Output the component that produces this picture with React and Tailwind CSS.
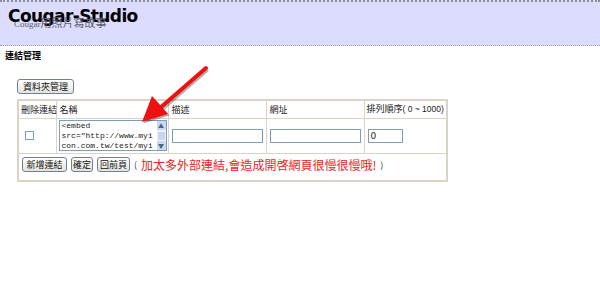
import React from 'react'

const cjk = { fontFamily: '"Noto Sans CJK TC", "DejaVu Sans", sans-serif' }

function Btn({ children, className = '' }) {
  return (
    <button
      className={`h-[15px] rounded-[3px] border border-[#6f7f99] bg-gradient-to-b from-white to-[#e3e3dd] text-[9px] leading-[13px] text-[#111] whitespace-nowrap ${className}`}
    >
      {children}
    </button>
  )
}

function Arrow() {
  return (
    <svg className="absolute left-[138px] top-[62px]" width="80" height="66" viewBox="0 0 80 66">
      <g transform="translate(1.5,1.5)" opacity="0.35">
        <line x1="68" y1="6" x2="22" y2="46" stroke="#222" strokeWidth="4" />
        <polygon points="4,60 14,34 30,52" fill="#222" />
      </g>
      <line x1="68" y1="6" x2="22" y2="46" stroke="#ee1111" strokeWidth="4" strokeLinecap="round" />
      <polygon points="4,60 14,34 30,52" fill="#ee1111" />
    </svg>
  )
}

export default function App() {
  return (
    <div className="relative w-[600px] h-[286px] bg-white overflow-hidden" style={cjk}>
      {/* header */}
      <div className="h-[46px] bg-[#dcdcfe] border-t-[2px] border-[#8a8f97] border-b border-b-[#9a9aa8] border-dotted">
        <div className="relative pl-[8px] pt-[3px]">
          <div className="text-[17px] font-bold leading-[22px] text-black" style={{ fontFamily: '"DejaVu Sans", sans-serif', letterSpacing: '-0.6px' }}>
            Cougar-Studio
          </div>
          <div className="absolute left-[14px] top-[15px] text-[11px] leading-[12px] text-[#5c5c72]" style={{ fontFamily: '"Liberation Serif", "Noto Sans CJK TC", serif' }}>
            <span className="text-[9px]">Cougar</span>用照片寫故事
          </div>
        </div>
      </div>

      <div className="pl-[5px] pt-[4px] text-[9px] leading-[12px] font-bold text-black">連結管理</div>

      <div className="flex pl-[17px] pt-[17px] h-[37px]">
        <Btn className="w-[57px]">資料夾管理</Btn>
      </div>

      <table className="ml-[17px] w-[431px] table-fixed border-collapse border-[2px] border-[#d8d4c8] text-[9px] text-[#222]">
        <colgroup>
          <col className="w-[38px]" />
          <col className="w-[112px]" />
          <col className="w-[98px]" />
          <col className="w-[98px]" />
          <col />
        </colgroup>
        <tbody>
          <tr className="h-[18px]">
            <td className="border border-[#d8d4c8] px-[2px] whitespace-nowrap">刪除連結</td>
            <td className="border border-[#d8d4c8] px-[3px]">名稱</td>
            <td className="border border-[#d8d4c8] px-[3px]">描述</td>
            <td className="border border-[#d8d4c8] px-[3px]">網址</td>
            <td className="border border-[#d8d4c8] pl-[2px] pr-0 whitespace-nowrap overflow-hidden">
              排列順序<span style={{ fontFamily: '"Liberation Sans", sans-serif' }} className="text-[8.5px]">( 0 ~ 1000)</span>
            </td>
          </tr>
          <tr className="h-[35px]">
            <td className="border border-[#d8d4c8] pl-[6px]">
              <div className="w-[9px] h-[9px] border border-[#7f9db9] bg-white" />
            </td>
            <td className="border border-[#d8d4c8] px-[2px]">
              <div className="flex w-[108px] h-[31px] border border-[#7f9db9] bg-white">
                <div
                  className="flex-1 pl-[2px] text-[8px] leading-[10px] text-[#222] overflow-hidden whitespace-pre"
                  style={{ fontFamily: '"Liberation Mono", monospace' }}
                >
                  {'<embed\nsrc="http://www.myi\ncon.com.tw/test/myi'}
                </div>
                <div className="w-[9px] flex flex-col justify-between bg-[#eef2fb]">
                  <div className="h-[9px] bg-[#c8d8f6] text-[6px] leading-[9px] text-center text-[#4d6185]">▲</div>
                  <div className="h-[8px] mx-[1px] bg-[#c8d6f4]" />
                  <div className="h-[9px] bg-[#c8d8f6] text-[6px] leading-[9px] text-center text-[#4d6185]">▼</div>
                </div>
              </div>
            </td>
            <td className="border border-[#d8d4c8] px-[3px]">
              <div className="w-[91px] h-[14px] border border-[#7f9db9] bg-white" />
            </td>
            <td className="border border-[#d8d4c8] px-[3px]">
              <div className="w-[91px] h-[14px] border border-[#7f9db9] bg-white" />
            </td>
            <td className="border border-[#d8d4c8] px-[3px]">
              <div className="w-[35px] h-[14px] border border-[#7f9db9] bg-white text-[9px] leading-[12px] pl-[2px]" style={{ fontFamily: '"DejaVu Sans", sans-serif' }}>0</div>
            </td>
          </tr>
          <tr className="h-[28px]">
            <td colSpan={5} className="border border-[#d8d4c8] pl-[3px] pb-[4px]">
              <div className="flex items-center gap-[4px] whitespace-nowrap">
                <Btn className="w-[45px]">新增連結</Btn>
                <Btn className="w-[22px]">確定</Btn>
                <Btn className="w-[33px]">回前頁</Btn>
                <span className="text-[9px] text-[#333]">(</span>
                <span className="text-[12px] leading-[16px] text-[#ee2222]">加太多外部連結,會造成開啓網頁很慢很慢哦!</span>
                <span className="text-[9px] text-[#333]">)</span>
              </div>
            </td>
          </tr>
        </tbody>
      </table>

      <Arrow />
    </div>
  )
}
